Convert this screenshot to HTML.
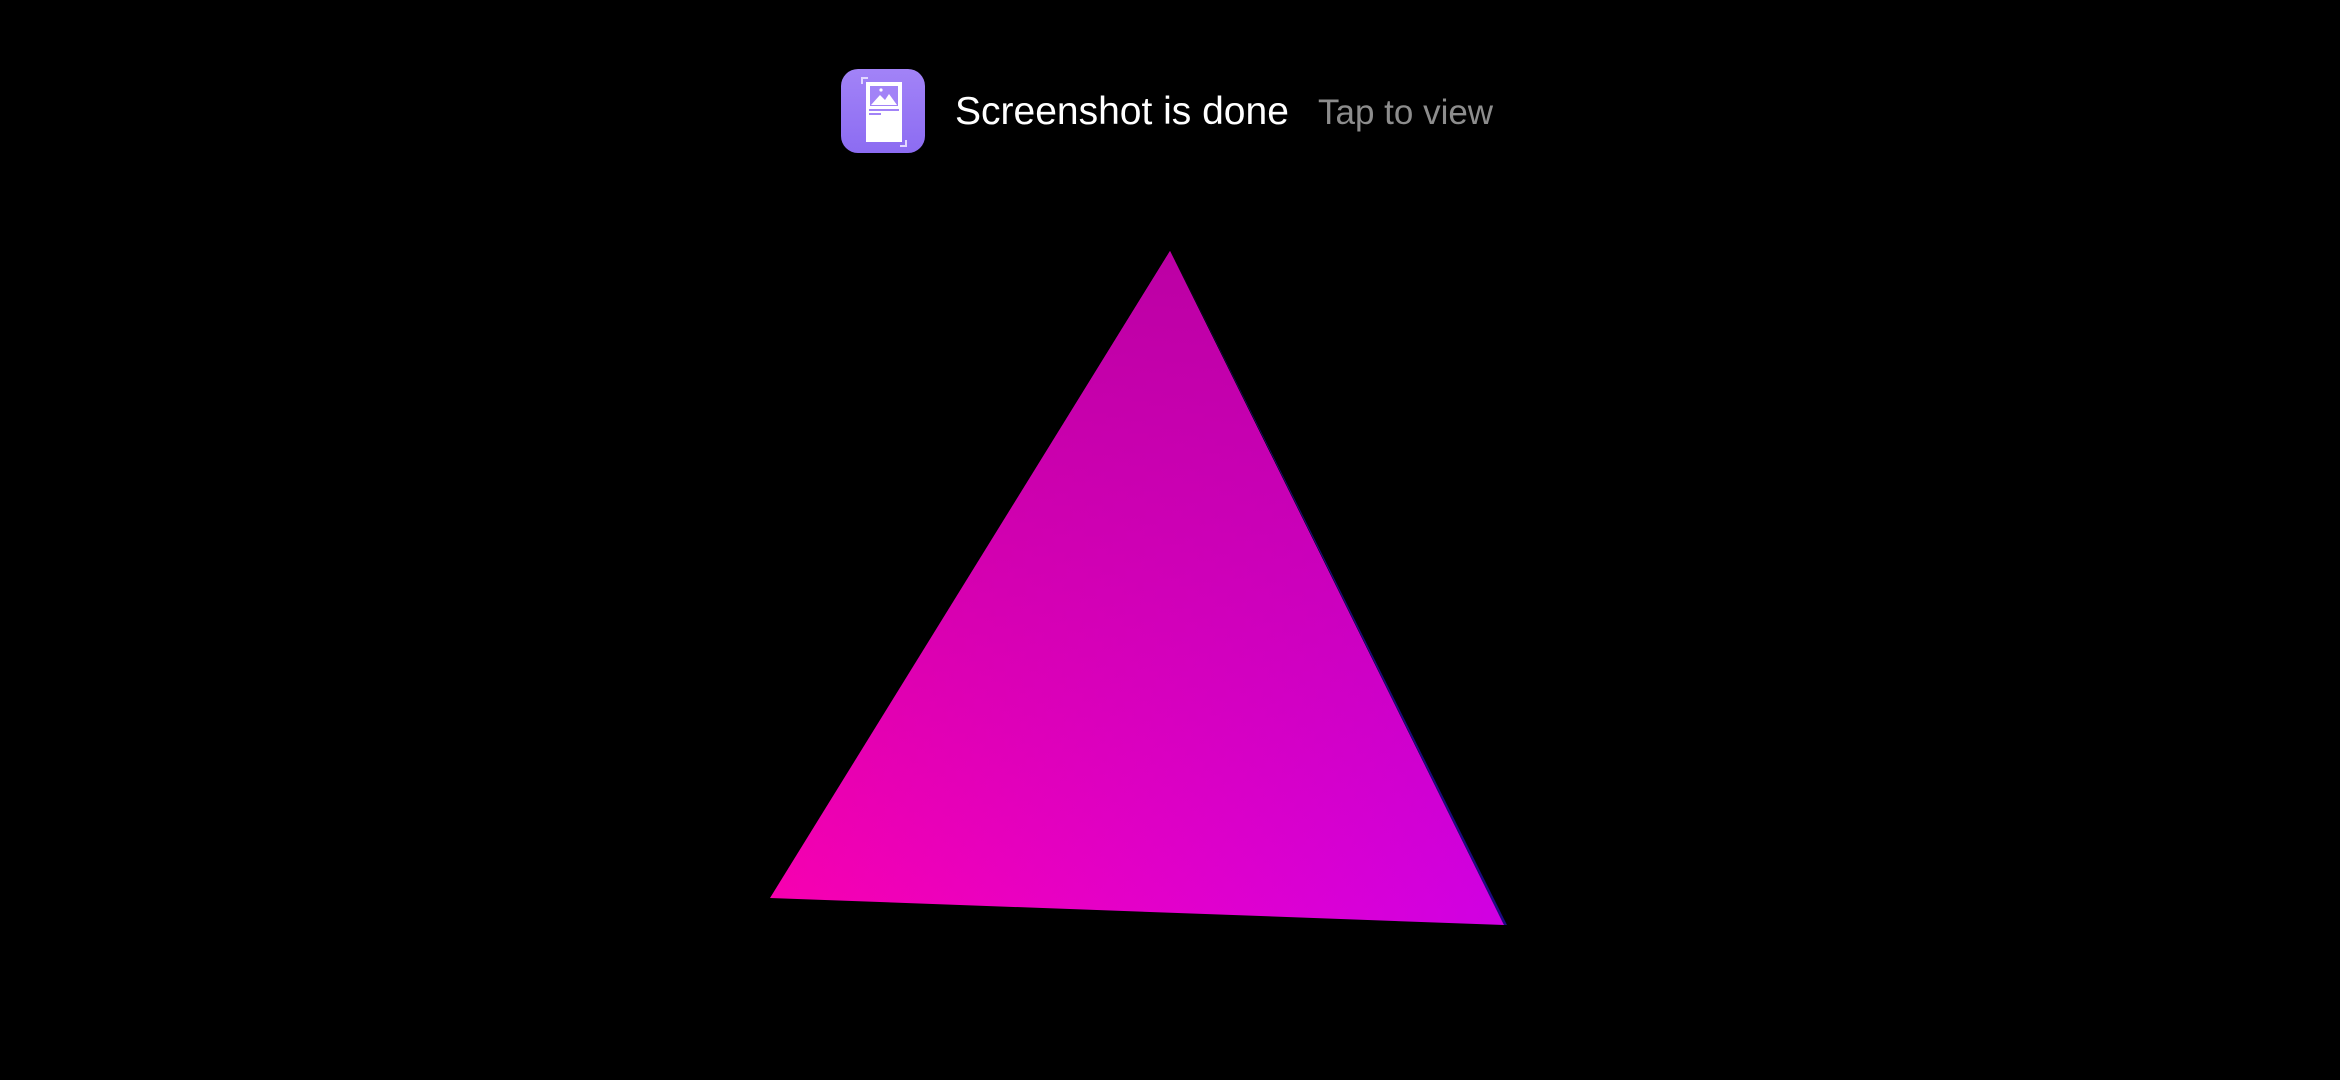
<!DOCTYPE html>
<html><head><meta charset="utf-8"><style>
html,body{margin:0;padding:0;background:#000;width:2340px;height:1080px;overflow:hidden;font-family:"Liberation Sans",Roboto,sans-serif}
.t1{position:absolute;left:955px;top:87px;font-size:39px;color:#fff;white-space:nowrap;line-height:50px}
.t2{position:absolute;left:1318px;top:88px;font-size:35px;color:#8d8d8d;white-space:nowrap;line-height:50px}
</style></head><body>
<svg width="2340" height="1080" style="position:absolute;left:0;top:0">
<defs>
<linearGradient id="g1" gradientUnits="userSpaceOnUse" x1="770" y1="898" x2="1504" y2="925">
<stop offset="0" stop-color="#f800b0"/><stop offset="1" stop-color="#d000e2"/></linearGradient>
<linearGradient id="g2" gradientUnits="userSpaceOnUse" x1="1170" y1="251" x2="1170" y2="910">
<stop offset="0" stop-color="#bc00a4" stop-opacity="1"/><stop offset="1" stop-color="#bc00a4" stop-opacity="0"/></linearGradient>
<linearGradient id="ic" x1="0" y1="0" x2="0" y2="1">
<stop offset="0" stop-color="#a283f7"/><stop offset="1" stop-color="#8c6cf2"/></linearGradient>
</defs>
<polygon points="1171,251 1507,925 1504,925" fill="#1a0a80"/>
<polygon points="1170,251 770,898 1504,925" fill="url(#g1)"/>
<polygon points="1170,251 770,898 1504,925" fill="url(#g2)"/>
<rect x="841" y="69" width="84" height="84" rx="17" fill="url(#ic)"/>
<rect x="866" y="82" width="36" height="60" fill="#fff"/>
<rect x="870" y="86" width="28" height="20" fill="#a283f7"/>
<polygon points="871,105 880,95 885,100 889,94 897,105" fill="#fff"/>
<circle cx="881" cy="90" r="1.6" fill="#fff"/>
<rect x="869" y="109" width="30" height="2" fill="#a283f7"/>
<rect x="869" y="113" width="12" height="2" fill="#a283f7"/>
<path d="M862 84 V78 H868" stroke="#e2d8ff" stroke-width="2" fill="none"/>
<path d="M906 140 V146 H900" stroke="#e2d8ff" stroke-width="2" fill="none"/>
</svg>
<div class="t1">Screenshot is done</div>
<div class="t2">Tap to view</div>
</body></html>
